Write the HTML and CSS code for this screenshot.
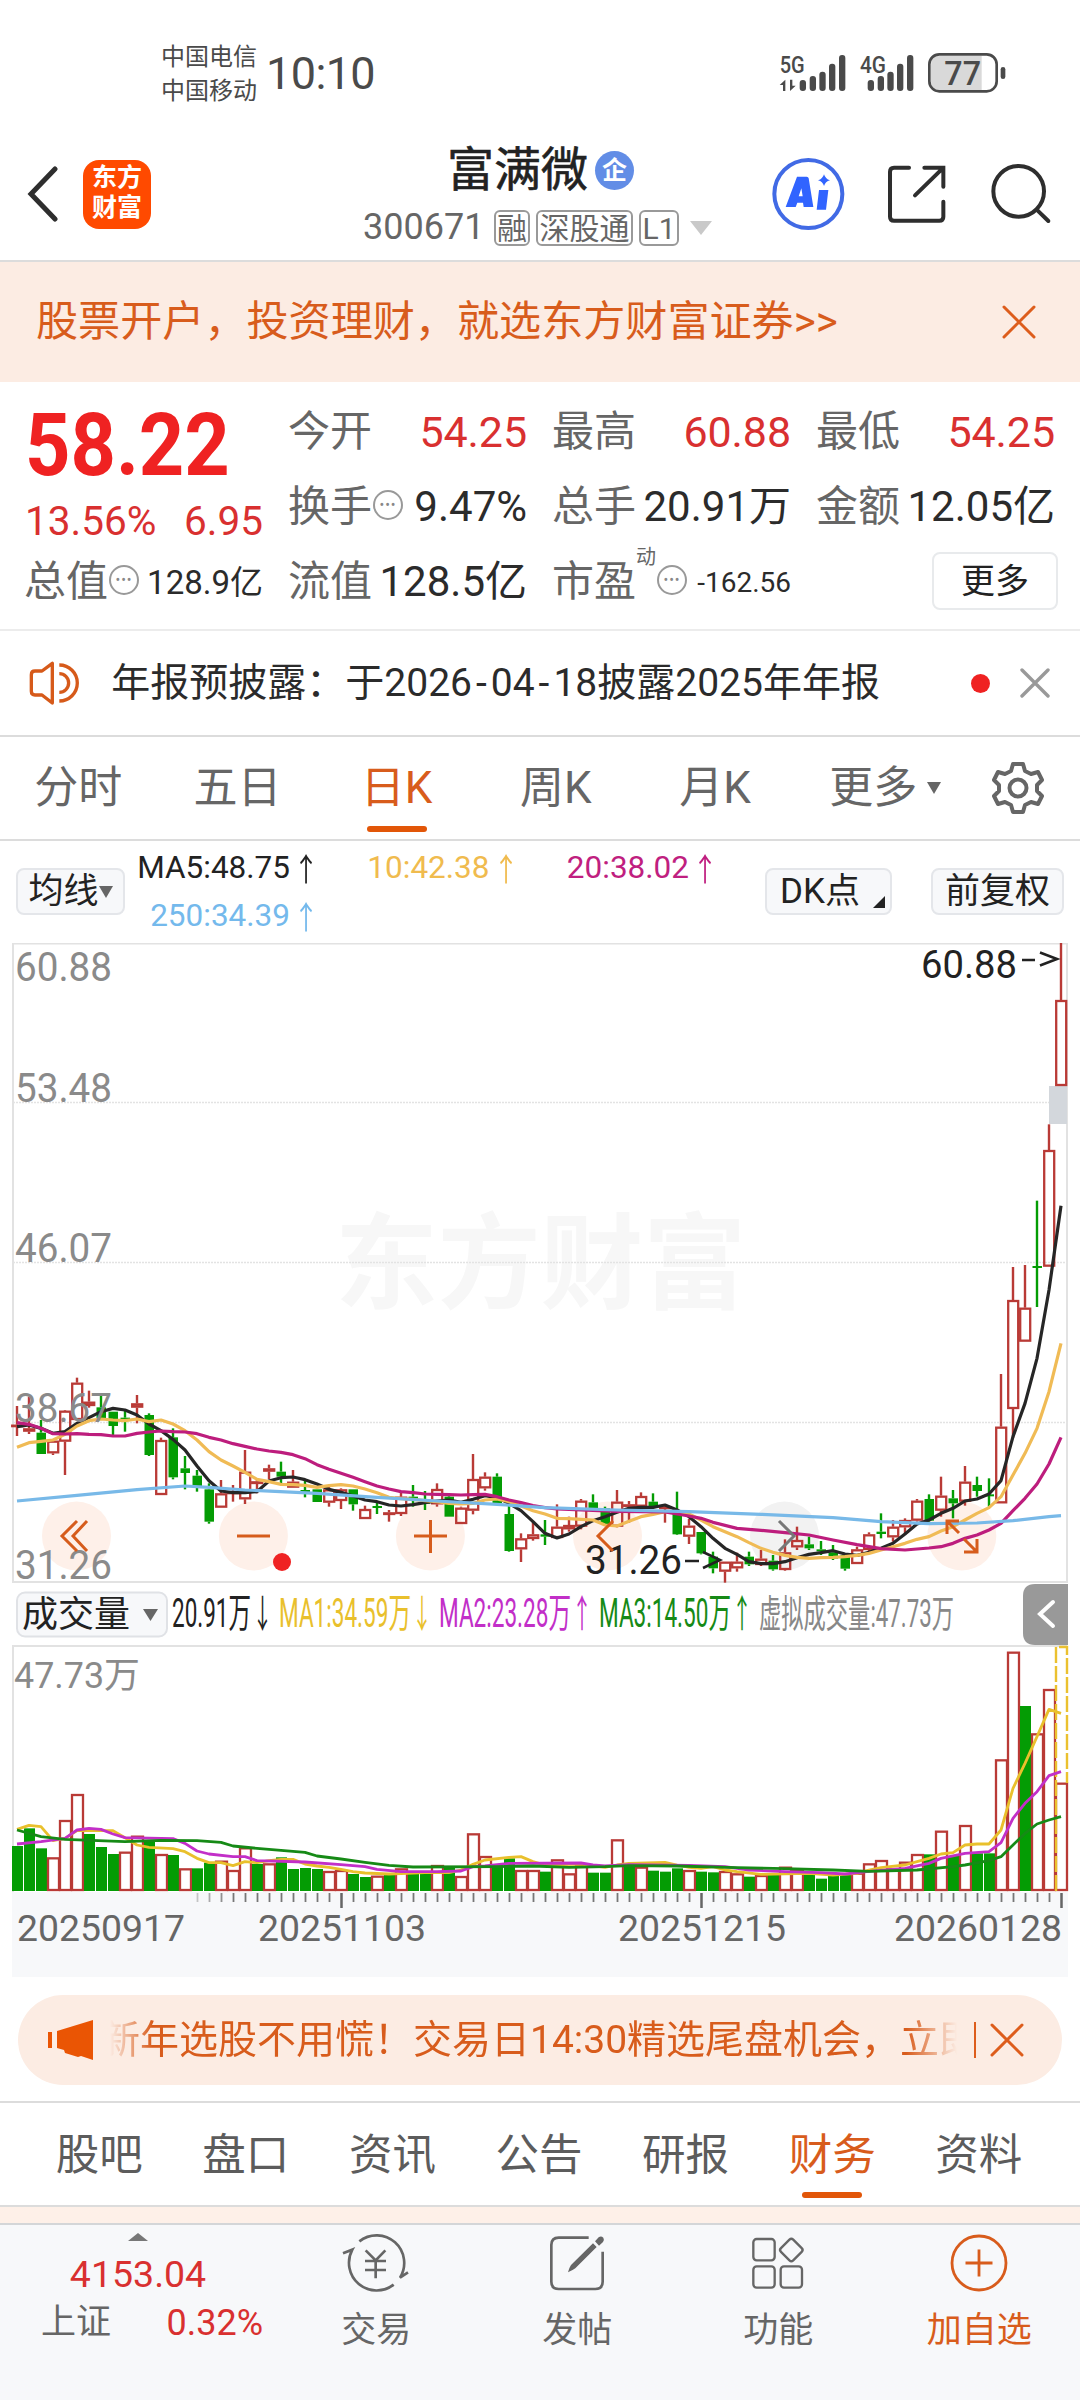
FILE: index.html
```html
<!DOCTYPE html>
<html lang="zh-CN">
<head>
<meta charset="utf-8">
<title>富满微 300671</title>
<link rel="stylesheet" href="styles.css">
</head>
<body>
<div class="status">
  <div class="carriers"><span>中国电信</span><span>中国移动</span></div>
  <span class="clock">10:10</span>
  <svg class="signals" viewBox="100 60 710 135" width="236.7" height="45">
    <g fill="#4a4a4a">
      <text x="120" y="129" font-size="69" font-weight="500" textLength="75" lengthAdjust="spacingAndGlyphs">5G</text>
      <path d="M120 165L137 149V183H130V165ZM151 149V183L168 167H158V149Z"/>
      <rect x="180" y="150" width="19" height="33" rx="9"/><rect x="210" y="138" width="19" height="45" rx="9"/><rect x="239" y="125" width="19" height="58" rx="9"/><rect x="268" y="101" width="19" height="82" rx="9"/><rect x="298" y="75" width="19" height="108" rx="9"/>
      <text x="361" y="129" font-size="69" font-weight="500" textLength="78" lengthAdjust="spacingAndGlyphs">4G</text>
      <rect x="384" y="150" width="19" height="33" rx="9"/><rect x="414" y="138" width="19" height="45" rx="9"/><rect x="443" y="125" width="19" height="58" rx="9"/><rect x="472" y="101" width="19" height="82" rx="9"/><rect x="502" y="75" width="19" height="108" rx="9"/>
      <path d="M600 78H726V180H600Q574 180 574 154V104Q574 78 600 78Z" fill="#d9d9d9"/>
      <rect x="569" y="73" width="202" height="111" rx="30" fill="none" stroke="#4a4a4a" stroke-width="8"/>
      <rect x="783" y="111" width="14" height="36" rx="7"/>
      <text x="614" y="165" font-size="100" font-weight="500" textLength="110" lengthAdjust="spacingAndGlyphs">77</text>
    </g>
  </svg>
</div>

<header class="header">
  <svg class="back" viewBox="0 0 32 56" width="32" height="56" fill="none" stroke="#2e2e2e" stroke-width="5" stroke-linecap="round"><path d="M28 3L4 28L28 53"/></svg>
  <div class="logo"><span>东方</span><span>财富</span></div>
  <div class="title">
    <div class="name">富满微<span class="corp">企</span></div>
    <div class="code"><span>300671</span><i class="tag t1">融</i><i class="tag t3">深股通</i><i class="tag t2">L1</i><b class="caret"></b></div>
  </div>
  <svg class="tools" viewBox="90 370 860 240" width="286.7" height="80" fill="none" stroke="#2e2e2e" stroke-width="12">
    <circle cx="205" cy="493" r="102" stroke="#416ae5"/>
    <path d="M171 441H200Q205 441 206 446L220 532H191L189 519H172L167 532H137ZM184 476L176 500H188Z" fill="#3164ff" stroke="none" fill-rule="evenodd"/>
    <path d="M237 481H265L258 540H230ZM252 434Q256 448 270 452Q256 456 252 469Q248 456 234 452Q248 448 252 434Z" fill="#3164ff" stroke="none"/>
    <path d="M507 414H462Q450 414 450 426V561Q450 573 462 573H598Q610 573 610 561V516M553 414H610V471M608 416L525 497" stroke-linecap="round"/>
    <circle cx="836" cy="485" r="76"/><path d="M890 540L925 574" stroke-linecap="round"/>
  </svg>
</header>

<div class="banner"><span>股票开户，投资理财，就选东方财富证券&gt;&gt;</span>
  <svg viewBox="0 0 34 34" width="34" height="34" stroke="#dd5d1c" stroke-width="3" stroke-linecap="round"><path d="M2 2L32 32M32 2L2 32"/></svg>
</div>

<section class="quote">
  <div class="last">
    <div class="price"><span>58.22</span></div>
    <div class="change"><span>13.56%</span><span>6.95</span></div>
  </div>
  <div class="cell"><label>今开</label><b class="up">54.25</b></div>
  <div class="cell"><label>最高</label><b class="up">60.88</b></div>
  <div class="cell"><label>最低</label><b class="up">54.25</b></div>
  <div class="cell"><label>换手</label><i class="dots">•••</i><b>9.47%</b></div>
  <div class="cell"><label>总手</label><b>20.91万</b></div>
  <div class="cell"><label>金额</label><b>12.05亿</b></div>
  <div class="cell"><label>总值</label><i class="dots">•••</i><b class="mid">128.9亿</b></div>
  <div class="cell"><label>流值</label><b>128.5亿</b></div>
  <div class="cell"><label>市盈</label><sup>动</sup><i class="dots">•••</i><b class="small">-162.56</b></div>
  <div class="cell end"><button class="more">更多</button></div>
</section>

<div class="notice">
  <svg viewBox="28 64 154 132" width="51.3" height="44" fill="none" stroke="#d65a1a" stroke-width="10"><path d="M98 71V190L67 166H46Q35 166 35 155V105Q35 94 46 94H67Z" stroke-linejoin="round"/><path d="M119 102A28 28 0 0 1 119 158M119 76A54 54 0 0 1 119 184"/></svg>
  <span class="notice-text">年报预披露：于2026<i>-</i>04<i>-</i>18披露2025年年报</span>
  <b class="dot"></b>
  <svg viewBox="0 0 30 30" width="30" height="30" stroke="#999" stroke-width="3.4" stroke-linecap="round"><path d="M2 2L28 28M28 2L2 28"/></svg>
</div>

<nav class="periods">
  <a>分时</a><a>五日</a><a class="on">日K</a><a>周K</a><a>月K</a><a>更多<b class="caret dark"></b></a>
  <svg viewBox="-27 -27 54 54" width="54" height="54" fill="none" stroke="#666" stroke-width="4" stroke-linejoin="round"><path d="M-5 -24H5L7 -17L13 -14L20 -16L24 -8L19 -3V3L24 8L20 16L13 14L7 17L5 24H-5L-7 17L-13 14L-20 16L-24 8L-19 3V-3L-24 -8L-20 -16L-13 -14L-7 -17Z"/><circle r="8.5"/></svg>
</nav>

<div class="averages">
  <div class="pill ma-pill">均线<b class="caret dark"></b></div>
  <div class="ma-list">
    <span class="c-black">MA5:48.75<i>↑</i></span><span class="c-yellow">10:42.38<i>↑</i></span><span class="c-pink">20:38.02<i>↑</i></span><span class="c-blue">250:34.39<i>↑</i></span>
  </div>
  <div class="pill dk">DK点<b class="corner"></b></div>
  <div class="pill fq">前复权</div>
</div>

<div class="charts"><svg id="chart" width="1080" height="1034" viewBox="0 943 1080 1034"></svg></div>

<div class="promo">
  <svg viewBox="0 0 46 40" width="46" height="40" fill="#ea5504"><path d="M0 12H4V28H0ZM9 11L45 0V40L33 36L30 37L17 33L16 30L9 28Z"/></svg>
  <div class="marquee"><span>新年选股不用慌！交易日14:30精选尾盘机会，立即</span></div>
  <b class="bar"></b>
  <svg viewBox="0 0 34 34" width="34" height="34" stroke="#dd5d1c" stroke-width="3" stroke-linecap="round"><path d="M2 2L32 32M32 2L2 32"/></svg>
</div>

<nav class="sections"><a>股吧</a><a>盘口</a><a>资讯</a><a>公告</a><a>研报</a><a class="on">财务</a><a>资料</a></nav>
<div class="strip"></div>

<footer class="bottom">
  <div class="index">
    <b class="tri"></b>
    <span class="points">4153.04</span>
    <div class="index-row"><span>上证</span><b>0.32%</b></div>
  </div>
  <a><svg viewBox="63 38 210 186" width="70" height="62" fill="none" stroke="#666" stroke-width="8"><path d="M118 66A83 83 0 0 1 240 175L264 159M221 196A83 83 0 0 1 97 91L69 102M137 93L167 123L196 93M167 123V177M135 125H198M135 152H198"/></svg><span>交易</span></a>
  <a><svg viewBox="666 38 210 186" width="70" height="62" fill="none" stroke="#666" stroke-width="8"><path d="M806 55H716Q694 55 694 77V187Q694 209 716 209H826Q848 209 848 187V97"/><path d="M819 72L830 83L766 147Q758 153 744 159Q747 146 753 137ZM825 66L836 54Q843 48 850 55Q854 62 849 68L837 79Z" fill="#666" stroke="none"/></svg><span>发帖</span></a>
  <a><svg viewBox="1270 38 210 186" width="70" height="62" fill="none" stroke="#666" stroke-width="7"><rect x="1301" y="59" width="64" height="64" rx="10"/><rect x="1301" y="141" width="64" height="64" rx="10"/><rect x="1383" y="141" width="64" height="64" rx="10"/><rect x="1389" y="66" width="52" height="52" rx="8" transform="rotate(45 1415 92)"/></svg><span>功能</span></a>
  <a class="add"><svg viewBox="-35 -31 70 62" width="70" height="62" fill="none" stroke="#d85c1c" stroke-width="2.8"><circle r="27"/><path d="M-13.5 0H13.5M0 -13.5V13.5"/></svg><span>加自选</span></a>
</footer>
<script src="chart.js"></script>
</body>
</html>
```
FILE: styles.css
```css
* { box-sizing: border-box; }
body {
  margin: 0; width: 1080px; height: 2400px; overflow: hidden; background: #fff; color: #2b2b2b;
  font-family: Roboto, "Noto Sans CJK SC", sans-serif; line-height: 1.2;
}
i, b { font-style: normal; font-weight: 400; }
svg { display: block; flex: none; }
svg text { font-family: Roboto, "Noto Sans CJK SC", sans-serif; }
span, a { white-space: nowrap; }
.caret { border: 11px solid transparent; border-top: 14px solid #c9c9c9; border-bottom: 0; }
.caret.dark { border-width: 12px 7px 0; border-top-color: #666; }

.status { display: flex; height: 130px; padding: 0 70px 0 161px; }
.carriers { display: flex; flex-direction: column; padding-top: 40px; font-size: 24px; line-height: 34px; color: #4a4a4a; }
.clock { margin: 47px auto 0 9px; font-size: 45px; line-height: 54px; letter-spacing: -0.6px; color: #4a4a4a; }
.signals { margin-top: 50px; }

.header { display: flex; height: 132px; padding-left: 27px; border-bottom: 2px solid #dcdcdc; }
.back { margin-top: 36px; }
.logo { display: flex; flex-direction: column; align-items: center; width: 68px; height: 69px; margin: 30px 0 0 24px; padding-top: 3px; border-radius: 16px; background: #ff4a00; color: #fff; font-size: 25px; font-weight: 700; line-height: 30px; }
.title { width: 414px; margin-left: 194px; }
.name { display: flex; align-items: center; height: 60px; margin-top: 10px; padding-left: 102px; font-size: 47px; color: #222; -webkit-text-stroke: 0.6px #222; }
.corp { width: 39px; height: 39px; margin-left: 7px; border-radius: 50%; background: #628de6; color: #fff; font-size: 25px; font-weight: 700; line-height: 39px; text-align: center; -webkit-text-stroke: 0; }
.code { display: flex; align-items: center; height: 40px; margin-top: 8px; padding-left: 18px; font-size: 36px; color: #666; }
.code span { width: 122px; margin-right: 9px; }
.tag { height: 36px; margin-right: 6px; border: 2px solid #999; border-radius: 6px; font-size: 30px; line-height: 33px; text-align: center; color: #666; white-space: nowrap; }
.t1 { width: 36px; } .t3 { width: 97px; } .t2 { width: 40px; }
.code .caret { margin-left: 5px; }
.tools { margin: 23px 0 0 11px; }

.banner { display: flex; align-items: center; justify-content: space-between; height: 120px; padding: 0 44px 0 36px; background: #fcece3; color: #d85c1c; font-size: 42.1px; }

.quote { display: grid; grid-template-columns: 238px 238px 238px 238px; grid-template-rows: 75px 75px 75px; column-gap: 26px; height: 249px; padding: 13px 0 0 25px; border-bottom: 2px solid #ececec; }
.last { grid-row: span 2; }
.price { height: 99px; font-size: 88px; font-weight: 700; line-height: 99px; color: #ef2222; }
.price span { display: inline-block; transform: scaleX(0.9); transform-origin: 0 50%; }
.change { display: flex; justify-content: space-between; font-size: 40.5px; line-height: 54px; color: #d93030; }
.cell { display: flex; align-items: center; font-size: 42px; color: #2b2b2b; }
.cell label { margin-left: -1px; color: #666; white-space: nowrap; }
.cell b { margin-left: auto; white-space: nowrap; }
.cell .up { color: #d93030; font-size: 43px; letter-spacing: -0.1px; }
.cell .mid { font-size: 33px; }
.cell .small { font-size: 28px; }
.cell sup { align-self: flex-start; margin: 0; font-size: 20px; color: #666; }
.dots { width: 30px; height: 30px; margin: -6px 0 0 1px; border: 2px solid #999; border-radius: 50%; font-size: 14px; line-height: 26px; letter-spacing: 1px; text-align: center; color: #888; }
.cell.end { justify-content: flex-end; }
.more { width: 126px; height: 58px; margin: -4px -3px 0 0; padding: 0; border: 2px solid #e8eaec; border-radius: 8px; background: #fff; color: #222; font: 34px/50px Roboto, "Noto Sans CJK SC", sans-serif; }

.notice { display: flex; align-items: center; height: 106px; padding: 0 30px 0 29px; border-bottom: 2px solid #dcdcdc; font-size: 39px; }
.notice-text { margin-left: 31px; }
.notice-text i { padding: 0 4px; }
.dot { width: 19px; height: 19px; margin: 0 30px 0 auto; border-radius: 50%; background: #ef2222; }

.periods { display: flex; align-items: center; height: 104px; padding-right: 35px; border-bottom: 2px solid #dcdcdc; font-size: 44px; color: #666; }
.periods a { display: flex; align-items: center; justify-content: center; width: 159.5px; height: 102px; margin-left: -0.3px; }
.periods a:first-child { margin-left: -1.5px; }
.periods a:nth-child(6) { padding-left: 22px; }
.periods .caret { margin: 0 0 0 10px; }
.periods svg { margin-left: auto; }
.on { position: relative; color: #d85c1c; }
.on::after { content: ""; position: absolute; left: 50%; bottom: 7px; width: 60px; height: 6px; margin-left: -30px; border-radius: 3px; background: #e25608; }

.averages { display: flex; height: 102px; padding-left: 16px; }
.pill { display: flex; align-items: center; justify-content: center; height: 47px; margin-top: 27px; border: 2px solid #e4e6ea; border-radius: 8px; background: #f7f8fa; color: #222; font-size: 35px; white-space: nowrap; }
.ma-pill { width: 109px; }
.dk { position: relative; width: 127px; margin-left: auto; padding-right: 17px; }
.corner { position: absolute; right: 5px; bottom: 5px; border-left: 12px solid transparent; border-bottom: 12px solid #222; }
.fq { width: 133px; margin: 27px 16px 0 39px; }
.ma-list { display: grid; grid-template-columns: 193px 199.5px 199.5px; grid-template-rows: 48px 48px; padding-top: 3px; font-size: 31.5px; line-height: 48px; }
.ma-list span { display: flex; justify-content: flex-end; }
.ma-list i { display: flex; justify-content: center; width: 24px; margin-left: 4px; font: 32px/46px "Noto Sans CJK SC", sans-serif; transform: scaleX(0.8); }
.c-black { color: #222; } .c-yellow { color: #f0bb4e; } .c-pink { color: #c01f80; } .c-blue { color: #74b9ec; }

.charts { height: 1034px; }
.promo { display: flex; align-items: center; width: 1044px; height: 90px; margin: 18px 18px 16px; padding: 0 38px 0 30px; border-radius: 45px; background: #fcece3; color: #d85c1c; font-size: 39px; }
.marquee { display: flex; width: 847px; margin-left: 16px; overflow: hidden; line-height: 60px; -webkit-mask-image: linear-gradient(90deg, transparent 0, #000 5%, #000 94%, transparent 100%); mask-image: linear-gradient(90deg, transparent 0, #000 5%, #000 94%, transparent 100%); }
.marquee span { margin-left: -9px; }
.bar { width: 2px; height: 36px; margin: 0 auto 0 17px; background: #dd5d1c; }

.sections { display: flex; height: 106px; padding: 0 28px 0 26px; border-top: 2px solid #dcdcdc; border-bottom: 2px solid #dcdcdc; font-size: 43.5px; line-height: 106px; color: #5c5c5c; }
.sections a { flex: 1; text-align: center; }
.strip { height: 16px; background: #fef0e8; }
.bottom { display: flex; height: 177px; border-top: 2px solid #d4d6d8; background: #f7f8fa; }
.index { display: flex; flex-direction: column; align-items: center; width: 276px; padding-top: 8px; }
.tri { border: 10px solid transparent; border-bottom: 8px solid #777; border-top: 0; }
.points { margin-top: 8px; font-size: 37.5px; line-height: 50px; color: #d93030; }
.index-row { display: flex; align-self: stretch; justify-content: space-between; padding: 0 13px 0 41px; font-size: 35px; line-height: 48px; color: #666; }
.index-row b { color: #d93030; font-size: 36px; }
.bottom a { display: flex; flex-direction: column; align-items: center; width: 201.3px; margin-left: -0.3px; padding-top: 7px; font-size: 35px; color: #666; line-height: 50px; }
.bottom a span { margin-top: 12px; }
.bottom .add { color: #d85c1c; }
```
FILE: chart.js
```js
// Candles: [colour, high, body top, body bottom, low], in thirds of a pixel below y = 1320.
const candles = [
 ['r',258,314,320,348],['r',230,325,335,342],['g',300,338,402,402],['r',362,362,400,405],['r',270,272,365,465],
 ['r',173,188,300,300],['r',212,245,258,263],['g',220,262,295,300],['g',275,275,318,350],['g',272,293,298,335],
 ['r',225,250,263,310],['g',280,285,405,408],['r',353,360,525,525],['g',325,352,472,478],['g',408,445,459,508],
 ['g',450,467,500,515],['g',490,508,605,611],['r',480,520,563,563],['r',495,515,520,545],['r',390,455,538,552],
 ['r',478,484,492,520],['r',434,445,455,478],['g',425,455,470,495],['r',450,485,503,503],['g',480,510,512,532],
 ['g',508,508,546,546],['r',495,508,548,560],['r',505,508,543,567],['g',508,508,553,572],['r',557,567,597,597],
 ['g',545,558,561,582],['r',570,577,585,605],['r',515,530,582,588],['g',495,530,538,560],['g',513,545,548,570],
 ['r',490,507,553,560],['g',525,530,590,590],['r',560,563,612,612],['r',402,477,572,583],['r',457,470,505,512],
 ['g',460,470,550,555],['g',555,582,693,695],['r',640,655,688,726],['r',605,643,657,662],['g',600,643,650,675],
 ['r',553,620,654,656],['r',590,615,628,635],['r',537,542,620,628],['g',523,547,565,570],['g',560,565,612,615],
 ['r',510,545,620,622],['r',543,553,560,608],['r',517,528,560,562],['g',520,545,560,565],['r',555,560,565,608],
 ['g',515,575,643,645],['r',597,617,650,672],['g',636,636,700,703],['g',695,710,745,760],['r',725,725,755,788],
 ['r',698,725,745,755],['g',695,710,733,738],['r',690,716,735,738],['g',705,722,748,752],['r',658,697,750,752],
 ['r',620,660,682,690],['g',650,673,685,690],['g',663,688,694,705],['g',675,697,716,720],['g',700,705,746,752],
 ['r',680,688,732,732],['r',637,643,690,695],['g',580,635,642,655],['r',600,620,652,665],['r',595,600,622,640],
 ['r',537,542,602,605],['g',523,537,602,605],['r',470,527,572,590],['g',510,535,550,595],['r',438,485,545,557],
 ['g',470,495,513,530],['g',475,523,527,560],['r',162,320,550,550],['r',-159,-60,267,354],['r',-165,-37,65,65],
 ['g',-358,-162,-159,-39],['r',-587,-510,-160,-160],['r',-1131,-960,-702,-702]
];
// Moving averages; a flat list has one value per day, a keyed one lists day, value pairs.
const ma5 = [320,315,325,340,335,310,293,275,265,270,285,312,332,358,390,438,482,513,518,518,515,483,473,471,479,492,508,517,528,540,545,555,558,554,548,543,540,547,538,527,533,550,572,605,640,654,642,620,602,590,577,565,562,562,555,570,590,620,655,685,703,725,731,731,725,713,703,698,692,702,706,697,685,670,642,612,600,580,565,543,537,522,482,350,250,115,-90,-343];
const ma10 = [382,368,364,360,343,318,302,297,300,302,297,305,300,312,332,360,395,420,438,457,478,485,493,494,496,502,497,494,498,507,518,532,536,538,542,545,550,552,550,540,537,545,558,572,582,595,596,598,600,615,618,604,590,583,575,577,582,600,620,635,650,668,685,697,706,712,715,713,712,710,706,700,690,680,670,658,650,633,620,600,580,563,530,465,400,325,215,70];
const ma20 = [0,308,1,313,2,325,3,341,4,342,5,341,6,343,7,344,8,348,9,348,10,340,11,336,12,333,13,335,14,336,15,341,16,352,17,360,18,371,19,379,20,387,21,393,22,397,23,404,24,416,25,434,26,448,27,460,28,472,29,485,30,498,31,507,32,515,33,518,34,522,35,523,36,524,37,525,38,524,39,523,40,530,41,540,42,548,43,557,44,563,45,567,47,570,50,574,54,576,56,588,57,595,58,607,60,625,62,631,64,638,66,645,68,660,70,674,72,686,74,690,75,687,76,684,77,680,78,670,79,655,80,645,81,630,82,610,83,572,84,535,85,492,86,432,87,352];
const ma250 = [0,543,5,526,10,509,14,498,16,502,19,510,25,520,30,532,35,543,40,553,44,563,50,570,56,575,62,583,68,593,72,605,76,611,80,609,83,602,86,590,87,587];
// Volume bars and averages, in thirds of a pixel below y = 1570; zero volume is at 962.
const volumes = [828,775,835,862,750,672,792,831,852,845,797,812,852,855,895,895,878,872,900,832,882,880,862,897,894,897,903,900,912,921,917,910,895,912,905,885,890,918,790,858,885,865,900,900,905,868,910,885,908,908,808,890,890,902,905,895,900,905,907,903,910,920,915,912,890,900,912,926,915,912,908,880,870,895,875,852,853,782,858,765,850,850,568,245,408,490,357,638];
const v1 = [0,778,1,766,2,770,3,812,4,805,5,782,8,782,9,803,10,825,11,832,13,836,14,845,15,865,16,878,17,878,18,887,19,875,20,878,21,872,22,868,23,868,24,882,25,888,26,892,27,898,28,905,29,909,31,912,34,908,36,908,37,900,38,883,39,870,41,862,42,860,43,875,44,885,47,882,49,892,50,885,51,880,54,877,55,885,56,892,57,895,58,890,59,900,60,905,62,913,66,910,68,915,70,910,71,900,72,893,74,885,75,875,76,865,77,852,78,848,79,825,80,822,81,822,82,780,83,655,84,580,85,500,86,418,87,430];
const v2 = [0,822,2,815,4,805,5,780,6,775,7,778,8,792,9,803,13,806,14,820,15,843,16,852,18,860,19,860,20,872,24,876,27,884,29,890,30,898,32,905,35,905,37,903,38,890,39,888,41,880,47,879,48,885,49,888,51,884,56,886,59,890,61,900,64,905,67,908,69,912,71,904,74,895,76,880,77,865,79,850,81,845,82,818,83,745,84,700,85,665,86,617,87,605];
const v3 = [0,780,2,800,4,808,9,815,12,811,15,812,17,817,18,828,20,835,22,841,24,847,25,858,27,867,29,877,31,886,33,891,40,890,43,888,46,892,49,890,51,887,55,888,60,893,64,896,68,900,71,904,75,900,78,890,79,885,81,872,82,860,83,825,84,790,85,762,86,750,87,740];

const RED = '#b93a36', GREEN = '#049c04';
const X = i => 17 + 12 * i;
const out = [];
const rect = (x, y, w, h, attrs) => out.push(`<rect x="${x}" y="${y}" width="${w}" height="${h}" ${attrs}/>`);
const path = (d, attrs) => out.push(`<path d="${d}" fill="none" ${attrs}/>`);
const text = (x, y, w, size, fill, s, extra = '') =>
  out.push(`<text x="${x}" y="${y}" font-size="${size}" fill="${fill}" textLength="${w}" lengthAdjust="spacingAndGlyphs" ${extra}>${s}</text>`);
const line = (data, base, colour, width, flat) => {
  const pts = [];
  if (flat) data.forEach((v, i) => pts.push([X(i), base + v / 3]));
  else for (let k = 0; k < data.length; k += 2) pts.push([X(data[k]), base + data[k + 1] / 3]);
  path('M' + pts.map(p => p.join(' ')).join('L'), `stroke="${colour}" stroke-width="${width}" stroke-linejoin="round"`);
};

// Price pane
text(335, 1301, 411, 104, '#f7f7f7', '东方财富', 'font-weight="700"');
rect(13, 943.5, 1054, 638.5, 'fill="none" stroke="#e2e2e2" stroke-width="2"');
[1102.5, 1262.5, 1422.5].forEach(y => path(`M13 ${y}H1067`, 'stroke="#e3e3e3" stroke-width="1.5" stroke-dasharray="2 1"'));
[76.5, 253.4, 430.4, 607.5, 784.5, 961.8].forEach((x, i) =>
  out.push(`<circle cx="${x}" cy="1536" r="34.5" fill="${i === 4 ? '#f2f2f2' : '#fef0e9'}"/>`));
rect(1049, 1086, 18, 38, 'fill="#d3d7dc"');
candles.forEach(([c, h, t, b, l], i) => {
  const x = X(i), col = c === 'r' ? RED : GREEN, y = v => 1320 + v / 3;
  if (h < t) path(`M${x} ${y(h)}V${y(t)}`, `stroke="${col}" stroke-width="2.4"`);
  if (l > b) path(`M${x} ${y(b)}V${y(l)}`, `stroke="${col}" stroke-width="2.4"`);
  if (c === 'r') rect(x - 4.8, y(t) + 1, 10, Math.max((b - t) / 3 - 2, 0.5), `fill="none" stroke="${col}" stroke-width="2.3"`);
  else rect(x - 4.5, y(t), 9.5, Math.max((b - t) / 3, 2), `fill="${col}"`);
});
line(ma5, 1320, '#262626', 3.2, true);
line(ma10, 1320, '#f0bb55', 3.2, true);
line(ma20, 1320, '#bd1d7d', 3.2);
line(ma250, 1320, '#78b9e8', 3.2);
[['60.88', 981], ['53.48', 1102], ['46.07', 1262], ['38.67', 1422], ['31.26', 1579]].forEach(([s, y]) => text(15, y, 97, 40, '#8a8a8a', s));
text(921, 978, 96, 39, '#222', '60.88');
path('M1022 960H1035M1040 952.5L1057 959L1040 965.5', 'stroke="#222" stroke-width="2.6"');
text(585, 1574, 97, 40, '#222', '31.26');
path('M685 1561H699M703 1552L720 1560L703 1568', 'stroke="#222" stroke-width="2.6"');
path('M77 1521L62 1536L77 1551M87 1521L73 1536L87 1551M237 1536H270M414 1536H447M430.5 1520V1553M613 1521L598 1536L613 1551', 'stroke="#d65c1c" stroke-width="3"');
path('M779 1521L794 1536L779 1551', 'stroke="#777" stroke-width="3"');
path('M959 1521H947V1534M948 1522L959 1533M964 1539L976 1551M964 1552H977V1539', 'stroke="#d65c1c" stroke-width="3"');
out.push('<circle cx="282" cy="1562" r="9" fill="#ef2222"/>');

// Volume legend
rect(17, 1592.5, 150, 44, 'rx="8" fill="#f7f8fa" stroke="#e0e2e6" stroke-width="2"');
text(22, 1627, 108, 36, '#222', '成交量');
out.push('<path d="M143 1609H158L150.5 1621Z" fill="#666"/>');
[
  [172, 79, '20.91万', 262.5, '↓', '#222'],
  [279, 132, 'MA1:34.59万', 422, '↓', '#e9c02c'],
  [439, 132, 'MA2:23.28万', 582, '↑', '#c22fc8'],
  [599, 132, 'MA3:14.50万', 742, '↑', '#168a16']
].forEach(([x, w, s, ax, a, colour]) => {
  text(x, 1627, w, 40, colour, s);
  text(ax - 10, 1627, 20, 38, colour, a);
});
text(759, 1627, 195, 38, '#888', '虚拟成交量:47.73万');
out.push('<path d="M1068 1584H1035Q1023 1584 1023 1596V1633Q1023 1645 1035 1645H1068Z" fill="#999"/>');
path('M1053 1602L1040 1614L1053 1626', 'stroke="#fff" stroke-width="4" stroke-linecap="round"');

// Volume pane
path('M13 1892V1646H1067', 'stroke="#e2e2e2" stroke-width="2"');
text(14, 1688, 126, 36, '#8a8a8a', '47.73万');
const volRed = new Set([3,4,5,9,10,12,14,17,18,19,21,26,27,30,32,35,37,38,39,42,43,45,46,47,50,52,56,59,60,62,64,65,70,71,72,73,74,75,77,79,82,83,85,86,87]);
volumes.forEach((v, i) => {
  const x = X(i), y = 1570 + v / 3, h = 1891 - y;
  if (volRed.has(i)) rect(x - 5, y + 1, 11, h - 2, `fill="#fff" stroke="${RED}" stroke-width="2.3"`);
  else rect(x - 5, y, 11, h, `fill="${GREEN}"`);
});
path('M1056 1891V1647H1067V1783', 'stroke="#ebc12f" stroke-width="2.4" stroke-dasharray="16 3"');
line(v1, 1570, '#e9c02c', 2.8);
line(v2, 1570, '#c22fc8', 2.8);
line(v3, 1570, '#168a16', 2.8);

// Time axis
rect(12, 1892, 1056, 85, 'fill="#f7f8fa"');
for (let i = 15; i < 88; i++) {
  const major = i === 27 || i === 57 || i === 87;
  path(`M${X(i) + 0.5} 1893V${major ? 1908 : 1902}`, `stroke="${major ? '#666' : '#777'}" stroke-width="${major ? 2.5 : 1.8}" opacity="${Math.min(1, (i - 13) / 5)}"`);
}
[['20250917', 17], ['20251103', 258], ['20251215', 618], ['20260128', 894]].forEach(([s, x]) => text(x, 1941, 168, 37, '#666', s));

document.getElementById('chart').innerHTML = out.join('');
```
